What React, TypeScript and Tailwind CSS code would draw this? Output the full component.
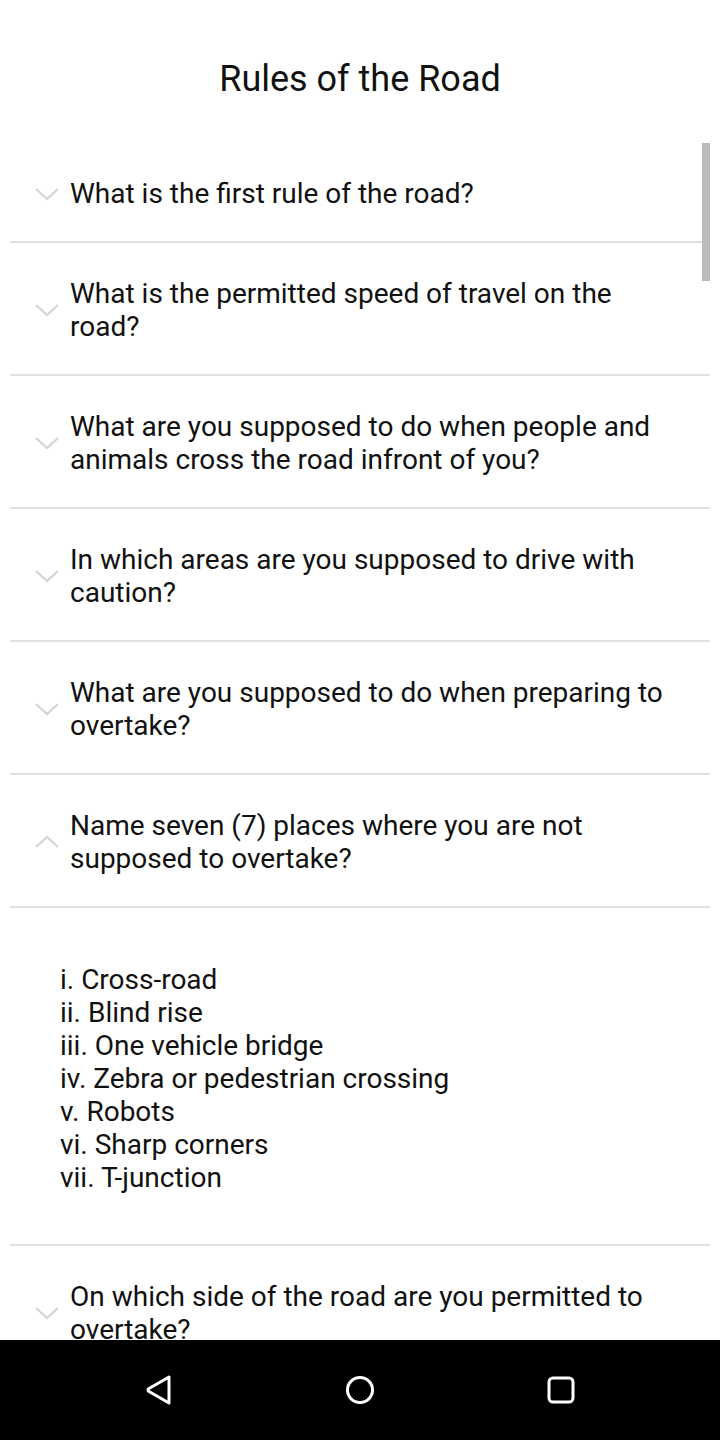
import React from 'react';

const questions: { q: string; open?: boolean; answer?: string[] }[] = [
  { q: 'What is the first rule of the road?' },
  { q: 'What is the permitted speed of travel on the road?' },
  { q: 'What are you supposed to do when people and animals cross the road infront of you?' },
  { q: 'In which areas are you supposed to drive with caution?' },
  { q: 'What are you supposed to do when preparing to overtake?' },
  {
    q: 'Name seven (7) places where you are not supposed to overtake?',
    open: true,
    answer: [
      'i. Cross-road',
      'ii. Blind rise',
      'iii. One vehicle bridge',
      'iv. Zebra or pedestrian crossing',
      'v. Robots',
      'vi. Sharp corners',
      'vii. T-junction',
    ],
  },
  { q: 'On which side of the road are you permitted to overtake?' },
];

function Chevron({ up }: { up?: boolean }) {
  return (
    <svg width="24" height="14" viewBox="0 0 24 14" className="shrink-0">
      <polyline
        points={up ? '1,12 12,2 23,12' : '1,2 12,12 23,2'}
        fill="none"
        stroke="#d4d4d4"
        strokeWidth="2.2"
      />
    </svg>
  );
}

export default function App() {
  return (
    <div className="h-[1440px] w-[720px] flex flex-col bg-white text-[#111] font-['Roboto',sans-serif] overflow-hidden">
      <div className="relative flex-1 overflow-hidden">
        <h1 className="h-[143px] pt-[57px] text-center text-[36px] leading-[44px] font-normal">Rules of the Road</h1>

        {/* scrollbar */}
        <div className="absolute right-[10px] top-[143px] w-[8px] h-[138px] bg-[#bababa]" />

        <div className="px-[10px]">
          {questions.map((item) => (
            <div key={item.q}>
              <div className="flex items-center pt-[34px] pb-[31px] pr-[40px]">
                <div className="w-[60px] shrink-0 flex justify-end pr-[11px]">
                  <Chevron up={item.open} />
                </div>
                <p className="text-[28px] leading-[33px]">{item.q}</p>
              </div>
              <div className="h-[2px] bg-[#e0e0e0]" />
              {item.open && item.answer && (
                <>
                  <div className="pl-[50px] pt-[55px] pb-[50px] text-[28px] leading-[33px]">
                    {item.answer.map((a) => (
                      <div key={a}>{a}</div>
                    ))}
                  </div>
                  <div className="h-[2px] bg-[#e0e0e0]" />
                </>
              )}
            </div>
          ))}
        </div>
      </div>

      <nav className="h-[100px] shrink-0 bg-black flex items-center justify-center gap-[172px]">
        <svg width="28" height="30" viewBox="0 0 28 30">
          <path d="M24 2 L24 28 L4 16.5 Q2 15 4 13.5 Z" fill="none" stroke="white" strokeWidth="3" strokeLinejoin="round" />
        </svg>
        <svg width="30" height="30" viewBox="0 0 30 30">
          <circle cx="15" cy="15" r="12.5" fill="none" stroke="white" strokeWidth="3" />
        </svg>
        <svg width="28" height="28" viewBox="0 0 28 28">
          <rect x="2" y="2" width="24" height="24" rx="4" fill="none" stroke="white" strokeWidth="3" />
        </svg>
      </nav>
    </div>
  );
}
